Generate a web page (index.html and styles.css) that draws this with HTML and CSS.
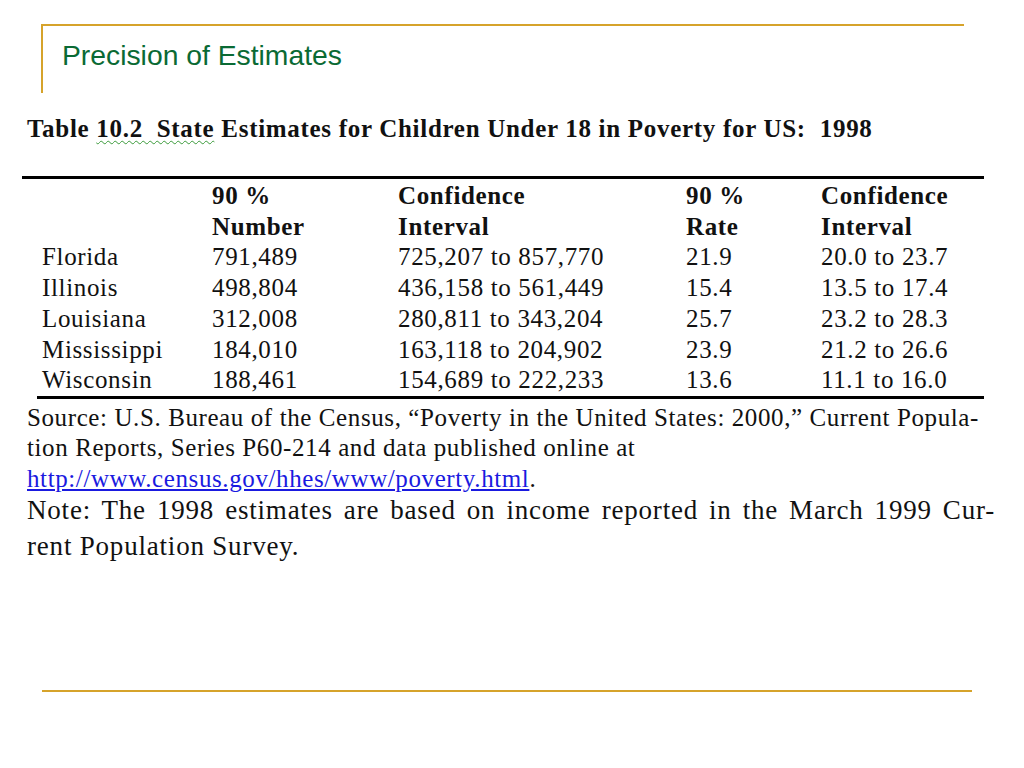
FILE: index.html
```html
<!DOCTYPE html>
<html>
<head>
<meta charset="utf-8">
<link rel="stylesheet" href="styles.css">
</head>
<body>
<div class="slide">
  <header class="title-box">
    <h1 class="title">Precision of Estimates</h1>
  </header>
  <section class="content">
    <div class="caption">Table <span class="spell">10.2&nbsp; State</span> Estimates for Children Under 18 in Poverty for US:&nbsp; 1998</div>
    <table class="data">
      <thead>
        <tr><th></th><th>90 %</th><th>Confidence</th><th>90 %</th><th>Confidence</th></tr>
        <tr><th></th><th>Number</th><th>Interval</th><th>Rate</th><th>Interval</th></tr>
      </thead>
      <tbody>
        <tr><td>Florida</td><td>791,489</td><td>725,207 to 857,770</td><td>21.9</td><td>20.0 to 23.7</td></tr>
        <tr><td>Illinois</td><td>498,804</td><td>436,158 to 561,449</td><td>15.4</td><td>13.5 to 17.4</td></tr>
        <tr><td>Louisiana</td><td>312,008</td><td>280,811 to 343,204</td><td>25.7</td><td>23.2 to 28.3</td></tr>
        <tr><td>Mississippi</td><td>184,010</td><td>163,118 to 204,902</td><td>23.9</td><td>21.2 to 26.6</td></tr>
        <tr><td>Wisconsin</td><td>188,461</td><td>154,689 to 222,233</td><td>13.6</td><td>11.1 to 16.0</td></tr>
      </tbody>
    </table>
    <div class="table-end"></div>
    <p class="source">Source: U.S. Bureau of the Census, “Poverty in the United States: 2000,” Current Popula-<br>tion Reports, Series P60-214 and data published online at<br><a class="link" href="#">http://www.census.gov/hhes/www/poverty.html</a>.</p>
    <p class="note"><span class="just">Note: The 1998 estimates are based on income reported in the March 1999 Cur-</span>rent Population Survey.</p>
  </section>
  <footer class="foot-rule"></footer>
</div>
</body>
</html>
```
FILE: styles.css
```css
html, body {
  margin: 0;
  padding: 0;
  background: #ffffff;
}
.slide {
  width: 1024px;
  height: 768px;
  position: relative;
  overflow: hidden;
  display: flex;
  flex-direction: column;
}
.title-box {
  margin: 24px 0 0 41px;
  width: 923px;
  height: 69px;
  border-top: 2px solid #d6a32b;
  border-left: 2px solid #d6a32b;
  box-sizing: border-box;
}
.title {
  margin: 0;
  padding: 13px 0 0 19px;
  font-family: "Liberation Sans", Arial, sans-serif;
  font-weight: normal;
  font-size: 28.3px;
  line-height: 32px;
  color: #0a6a34;
}
.content {
  margin: 0 0 0 22px;
  width: 975px;
  font-family: "Liberation Serif", "Times New Roman", serif;
  color: #111;
}
.caption {
  margin: 21px 0 0 5px;
  font-weight: bold;
  font-size: 25px;
  letter-spacing: 0.7px;
  line-height: 30px;
}
.spell {
  text-decoration: underline wavy #3a9a3a;
  text-decoration-thickness: 1px;
  text-underline-offset: 3px;
}
.data {
  margin-top: 32px;
  width: 962px;
  border-collapse: collapse;
  border-top: 3px solid #000;
  font-size: 25px;
  letter-spacing: 0.65px;
  line-height: 30.7px;
}
.data th, .data td {
  padding: 0;
  text-align: left;
  vertical-align: top;
  white-space: nowrap;
}
.data th {
  font-weight: bold;
}
.data thead tr:first-child th {
  padding-top: 2px;
}
.data th:nth-child(1), .data td:nth-child(1) { width: 170px; padding-left: 20px; }
.data th:nth-child(2), .data td:nth-child(2) { width: 186px; }
.data th:nth-child(3), .data td:nth-child(3) { width: 288px; }
.data th:nth-child(4), .data td:nth-child(4) { width: 135px; }
.table-end {
  margin-left: 15px;
  width: 947px;
  height: 3px;
  background: #000;
}
.source {
  margin: 4px 0 0 5px;
  font-size: 25px;
  letter-spacing: 0.6px;
  line-height: 30.5px;
}
.link {
  color: #1a1ae0;
  text-decoration: underline;
}
.note {
  margin: -2px 0 0 5px;
  width: 968px;
  font-size: 27px;
  letter-spacing: 0.8px;
  line-height: 36px;
}
.just {
  display: block;
  text-align: justify;
  text-align-last: justify;
}
.foot-rule {
  margin: auto 0 76px 42px;
  width: 930px;
  height: 2px;
  background: #d6a32b;
}
```
